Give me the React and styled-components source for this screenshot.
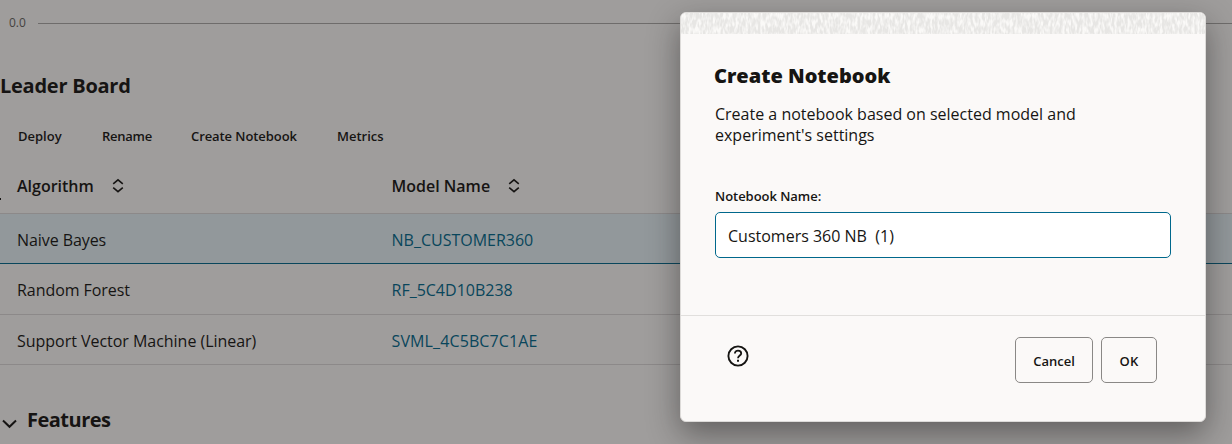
import React from 'react';
import styled, { createGlobalStyle } from 'styled-components';

const ink = '#161513';
const link = '#00688c';
const line = 'rgba(22, 21, 19, 0.14)';

const GlobalStyle = createGlobalStyle`
  * { box-sizing: border-box; }
  body {
    margin: 0;
    background: #fbf9f7;
    color: ${ink};
    font-family: "Open Sans", "Noto Sans", sans-serif;
    font-size: 16px;
    overflow: hidden;
  }
  h2, p { margin: 0; }
`;

const Page = styled.main`
  position: relative;
  display: flex;
  flex-direction: column;
  width: 1232px;
  height: 444px;
  overflow: hidden;
`;

const ChartAxis = styled.div`
  display: flex;
  align-items: center;
  gap: 12px;
  height: 46px;
  padding-left: 9px;
`;

const TickLabel = styled.span`
  width: 17px;
  font-size: 12px;
  line-height: 16px;
  color: #65625f;
  padding-bottom: 1px;
`;

const AxisLine = styled.span`
  flex: 1;
  height: 1px;
  margin-top: 1px;
  background: #a9a7a5;
`;

const SectionTitle = styled.h2`
  font-size: 20px;
  line-height: 28px;
  font-weight: 700;
  letter-spacing: ${(p) => p.$tracking};
`;

const BoardHeading = styled.header`
  padding-top: 26px;
  height: 112px;
  display: flex;
  flex-direction: column;
  justify-content: space-between;
`;

const Toolbar = styled.nav`
  display: flex;
  gap: 39px;
  padding-left: 18px;
  height: 32px;
`;

const ToolbarButton = styled.button`
  padding: 0;
  border: 0;
  background: none;
  color: inherit;
  font: 600 13px/20px "Open Sans", "Noto Sans", sans-serif;
  letter-spacing: ${(p) => p.$tracking};
  width: ${(p) => p.$width}px;
  height: 20px;
  text-align: left;
  white-space: nowrap;
`;

const Table = styled.div`
  display: flex;
  flex-direction: column;
`;

const Row = styled.div`
  display: grid;
  grid-template-columns: 374.5px 1fr;
  align-items: center;
  height: ${(p) => p.$height}px;
  padding: 2px 0 0 17px;
  border-bottom: 1px solid ${(p) => (p.$selected ? link : line)};
  background: ${(p) => (p.$selected ? '#e4f1f5' : 'transparent')};
`;

const HeaderRow = styled(Row)`
  padding-top: 0;
  font-weight: 600;
`;

const HeaderCell = styled.div`
  display: flex;
  align-items: center;
  gap: 17px;
  line-height: 22px;
`;

const Cell = styled.span`
  line-height: 22px;
  letter-spacing: ${(p) => p.$tracking || '0'};
  white-space: nowrap;
`;

const ModelLink = styled(Cell)`
  color: ${link};
`;

const EdgeMark = styled.span`
  position: absolute;
  left: 0;
  top: 198px;
  width: 1px;
  height: 2px;
  background: ${ink};
`;

const FeaturesHeading = styled.header`
  display: flex;
  align-items: center;
  gap: 9px;
  padding: 41px 0 0 2px;

  svg { margin-top: 8px; }
`;

const Overlay = styled.div`
  position: absolute;
  inset: 0;
  padding: 12px 0 0 680px;
  background: rgba(22, 21, 19, 0.4);
`;

const Dialog = styled.section`
  display: flex;
  flex-direction: column;
  width: 526px;
  height: 410px;
  border: 1px solid #dddbd9;
  border-radius: 6px;
  background: #fbf9f8;
  box-shadow: 0 12px 32px 0 rgba(22, 21, 19, 0.45);
  overflow: hidden;
`;

const Strip = styled.svg`
  display: block;
  width: 100%;
  height: 21px;
  flex: none;
  background: #e7e6e4;
`;

const DialogBody = styled.div`
  flex: 1;
  display: flex;
  flex-direction: column;
  padding: 28px 34px 0;
`;

const DialogTitle = styled.h2`
  font-size: 20px;
  line-height: 28px;
  font-weight: 800;
  margin-left: -1px;
`;

const Description = styled.p`
  margin-top: 14px;
  line-height: 21px;
  width: 400px;
`;

const Field = styled.label`
  display: flex;
  flex-direction: column;
  margin-top: 41px;
  font-size: 13px;
  font-weight: 600;
  line-height: 18px;
  letter-spacing: -0.04px;
`;

const Input = styled.input`
  height: 46px;
  margin-top: 7px;
  padding: 1px 12px 0;
  border: 1px solid #00688c;
  border-radius: 5px;
  outline: 0;
  background: #fff;
  color: ${ink};
  font: 400 16px/22px "Open Sans", "Noto Sans", sans-serif;
  white-space: pre;
`;

const DialogFooter = styled.footer`
  display: flex;
  align-items: flex-start;
  gap: 8px;
  height: 106px;
  padding: 21px 48px 0 47px;
  border-top: 1px solid #e1dfdd;
`;

const HelpButton = styled.span`
  display: flex;
  margin: 8px auto 0 -1px;
`;

const Button = styled.button`
  width: ${(p) => p.$width}px;
  height: 46px;
  padding: 2px 0 0;
  border: 1px solid #8a8886;
  border-radius: 5px;
  background: transparent;
  color: ${ink};
  font: 600 13px/20px "Open Sans", "Noto Sans", sans-serif;
  letter-spacing: ${(p) => p.$tracking || '0'};
`;

const SortIcon = () => (
  <svg width="14" height="16" viewBox="0 0 14 16" fill="none" stroke={ink} strokeWidth="1.6">
    <path d="M2.2 5.8 7 1.8 11.8 5.8M2.2 9.7 7 13.7 11.8 9.7" />
  </svg>
);

const ChevronDown = () => (
  <svg width="16" height="10" viewBox="0 0 16 10" fill="none" stroke={ink} strokeWidth="2">
    <path d="M1 1.5 7.5 7.8 14 1.5" />
  </svg>
);

const HelpIcon = () => (
  <svg width="22" height="22" viewBox="0 0 22 22" fill="none" stroke={ink}>
    <circle cx="11" cy="11" r="9.6" strokeWidth="1.9" />
    <path d="M7.9 8.5C7.9 6.6 9.2 5.6 11 5.6S14.2 6.7 14.2 8.4C14.2 10.4 11 10.7 11 13.2" strokeWidth="1.8" />
    <path d="M11 14.8V16.8" strokeWidth="2" />
  </svg>
);

const TextureStrip = () => (
  <Strip aria-hidden="true">
    <filter id="weave" x="0" y="0" width="100%" height="100%" colorInterpolationFilters="sRGB">
      <feTurbulence type="fractalNoise" baseFrequency="0.4 0.16" numOctaves="2" seed="8" stitchTiles="stitch" />
      <feColorMatrix values="0 0 0 0 0.98  0 0 0 0 0.976  0 0 0 0 0.97  3 0 0 0 -1.1" />
    </filter>
    <rect width="100%" height="100%" filter="url(#weave)" />
  </Strip>
);

const actions = [
  { label: 'Deploy', width: 45, tracking: '0' },
  { label: 'Rename', width: 50, tracking: '-0.25px' },
  { label: 'Create Notebook', width: 107, tracking: '-0.08px' },
  { label: 'Metrics', width: 48, tracking: '0' },
];

const models = [
  { algorithm: 'Naive Bayes', name: 'NB_CUSTOMER360', height: 50, selected: true, tracking: '-0.08px' },
  { algorithm: 'Random Forest', name: 'RF_5C4D10B238', height: 51, tracking: '-0.06px' },
  { algorithm: 'Support Vector Machine (Linear)', name: 'SVML_4C5BC7C1AE', height: 50, tracking: '-0.03px', nameTracking: '0.12px' },
];

export default function App() {
  return (
    <Page>
      <GlobalStyle />
      <ChartAxis>
        <TickLabel>0.0</TickLabel>
        <AxisLine />
      </ChartAxis>
      <BoardHeading>
        <SectionTitle $tracking="-0.25px">Leader Board</SectionTitle>
        <Toolbar>
          {actions.map((a) => (
            <ToolbarButton key={a.label} $width={a.width} $tracking={a.tracking}>{a.label}</ToolbarButton>
          ))}
        </Toolbar>
      </BoardHeading>
      <Table>
        <HeaderRow $height={56}>
          <HeaderCell>Algorithm <SortIcon /></HeaderCell>
          <HeaderCell>Model Name <SortIcon /></HeaderCell>
        </HeaderRow>
        {models.map((m) => (
          <Row key={m.name} $height={m.height} $selected={m.selected}>
            <Cell $tracking={m.tracking}>{m.algorithm}</Cell>
            <ModelLink $tracking={m.nameTracking}>{m.name}</ModelLink>
          </Row>
        ))}
      </Table>
      <FeaturesHeading>
        <ChevronDown />
        <SectionTitle $tracking="-0.5px">Features</SectionTitle>
      </FeaturesHeading>
      <EdgeMark />
      <Overlay>
        <Dialog role="dialog">
          <TextureStrip />
          <DialogBody>
            <DialogTitle>Create Notebook</DialogTitle>
            <Description>Create a notebook based on selected model and experiment's settings</Description>
            <Field>
              Notebook Name:
              <Input readOnly value={'Customers 360 NB  (1)'} />
            </Field>
          </DialogBody>
          <DialogFooter>
            <HelpButton><HelpIcon /></HelpButton>
            <Button $width={78}>Cancel</Button>
            <Button $width={56} $tracking="0.3px">OK</Button>
          </DialogFooter>
        </Dialog>
      </Overlay>
    </Page>
  );
}
